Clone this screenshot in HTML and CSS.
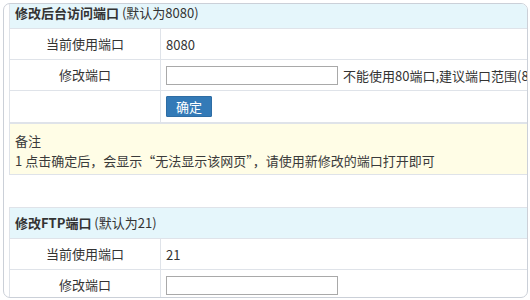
FILE: index.html
```html
<!DOCTYPE html>
<html lang="zh-CN">
<head>
<meta charset="utf-8">
<title>端口设置</title>
<link rel="stylesheet" href="styles.css">
</head>
<body>
<div class="frame">
  <div class="section first">
    <div class="head"><b>修改后台访问端口</b> (默认为8080)</div>
    <div class="row">
      <div class="label">当前使用端口</div>
      <div class="value">8080</div>
    </div>
    <div class="row">
      <div class="label">修改端口</div>
      <div class="value"><input class="port" type="text"><span class="hint">不能使用80端口,建议端口范围(8000-9000)</span></div>
    </div>
    <div class="row tall">
      <div class="label"></div>
      <div class="value"><button class="btn" type="button">确定</button></div>
    </div>
  </div>
  <div class="note">
    <div>备注</div>
    <div>1 点击确定后，会显示“无法显示该网页”，请使用新修改的端口打开即可</div>
  </div>
  <div class="section second">
    <div class="head"><b>修改FTP端口</b> (默认为21)</div>
    <div class="row">
      <div class="label">当前使用端口</div>
      <div class="value">21</div>
    </div>
    <div class="row">
      <div class="label">修改端口</div>
      <div class="value"><input class="port" type="text"></div>
    </div>
  </div>
</div>
</body>
</html>
```
FILE: styles.css
```css
html, body {
  margin: 0;
  padding: 0;
  background: #fff;
}
body {
  font-family: "Noto Sans CJK SC", "Noto Sans", sans-serif;
  font-size: 13px;
  color: #333;
}
.frame {
  margin: 3px 2px 0 3px;
  height: 293px;
  border: 1px solid #cbd0d8;
  border-radius: 7px;
  overflow: hidden;
  padding-left: 5px;
  background: #fff;
}
.section {
  width: 720px;
  border-left: 1px solid #dfe3e9;
}
.first {
  margin-top: -6px;
}
.second {
  margin-top: 32px;
  border-top: 1px solid #dfe3e9;
}
.head {
  height: 30px;
  line-height: 30px;
  padding-left: 5px;
  background: #e5f6fb;
  border-bottom: 1px solid #dfe3e9;
}
.head b {
  font-weight: bold;
}
.row {
  display: grid;
  grid-template-columns: 151px 1fr;
  height: 30px;
  border-bottom: 1px solid #dfe3e9;
}
.row.tall {
  height: 31px;
}
.label {
  border-right: 1px solid #dfe3e9;
  text-align: center;
  line-height: 30px;
}
.value {
  display: flex;
  align-items: center;
  padding-left: 5px;
}
.port {
  box-sizing: border-box;
  width: 172px;
  height: 19px;
  margin: 0;
  padding: 0 3px;
  border: 1px solid #a9a9a9;
  background: #fff;
}
.hint {
  margin-left: 5px;
  white-space: nowrap;
}
.btn {
  box-sizing: border-box;
  width: 46px;
  height: 21px;
  margin: 0;
  padding: 0;
  border: 1px solid #2e6da4;
  border-radius: 1px;
  background: #337ab7;
  color: #fff;
  font-family: inherit;
  font-size: 13px;
  line-height: 19px;
}
.note {
  width: 720px;
  padding: 7px 0 3px 5px;
  line-height: 20px;
  background: #fffde6;
  border-top: 1px solid #dfe3e9;
  border-bottom: 1px solid #dfe3e9;
  border-left: 1px solid #dfe3e9;
  color: #3a3a3a;
}
```
